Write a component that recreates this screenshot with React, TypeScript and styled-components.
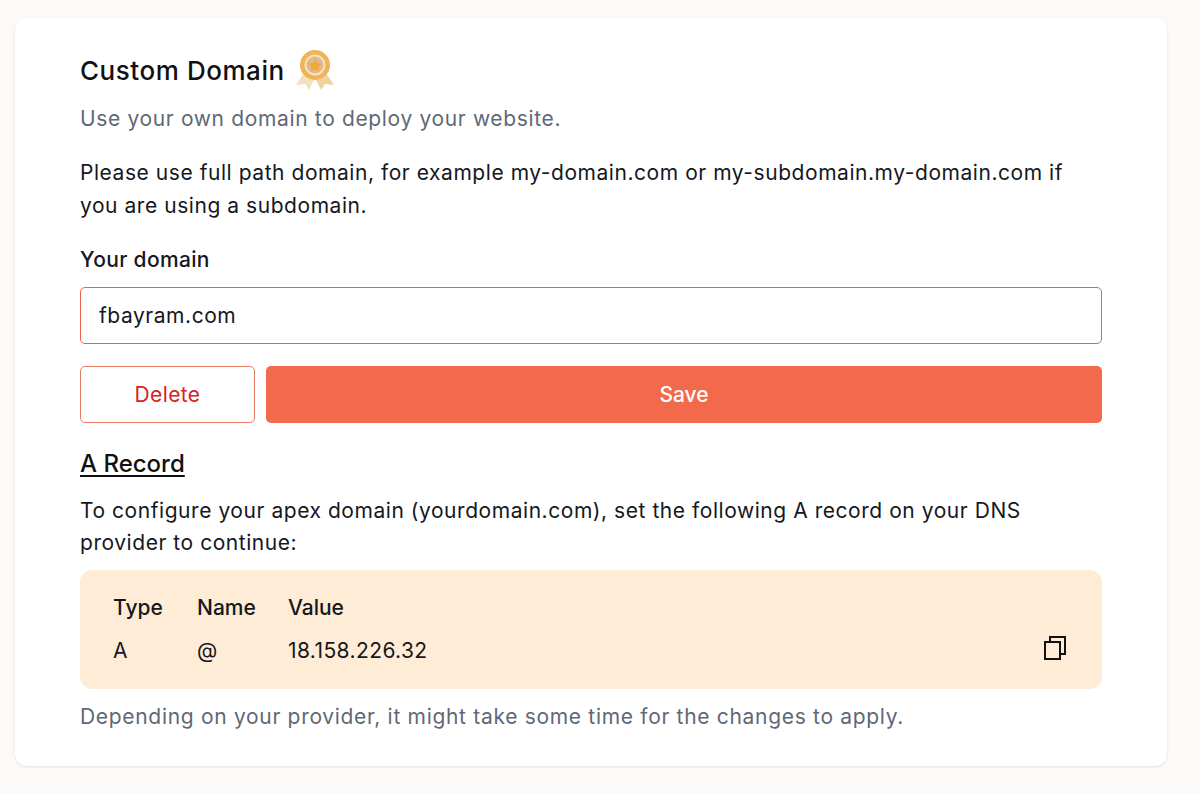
import styled, { createGlobalStyle } from 'styled-components';

const GlobalStyle = createGlobalStyle`
    html, body {
        margin: 0;
        padding: 0;
        background: #fbfaf8;
        font-family: "Inter", "Liberation Sans", sans-serif;
    }
`

const PageStyle = styled.div`
    width: 1200px;
    height: 794px;
    padding: 18px 33px 0px 15px;
    box-sizing: border-box;
    overflow: hidden;
`

const CardStyle = styled.div`
    height: 748px;
    padding: 30px 65px 0px 65px;
    box-sizing: border-box;
    background: #fff;
    border-radius: 12px;
    box-shadow: 0px 1px 3px rgba(0, 0, 0, 0.1);
`

const TitleRow = styled.div`
    height: 44px;
    display: flex;
    align-items: center;
    gap: 7px;
`

const TitleStyle = styled.h2`
    margin: 0;
    font-size: 26px;
    font-weight: 500;
    color: #111;
    letter-spacing: 0.55px;
`

const SubtitleStyle = styled.p`
    margin: 13px 0px 0px 0px;
    font-size: 21px;
    line-height: 28px;
    letter-spacing: 0.65px;
    color: #5f6877;
`

const BodyText = styled.p`
    margin: 0;
    font-size: 21px;
    line-height: 33px;
    letter-spacing: 0.55px;
    color: #15181d;
`

const Intro = styled(BodyText)`
    margin-top: 23px;
`

const FieldLabel = styled.label`
    display: block;
    margin-top: 23px;
    font-size: 21px;
    line-height: 30px;
    font-weight: 500;
    letter-spacing: 0.35px;
    color: #15181d;
`

const InputStyle = styled.input`
    display: block;
    width: 100%;
    height: 57px;
    margin-top: 12px;
    padding: 0px 18px;
    box-sizing: border-box;
    border: 1px solid #ea6244;
    border-radius: 5px;
    background: #fff;
    font-family: inherit;
    font-size: 21px;
    letter-spacing: 0.55px;
    color: #15181d;
    outline: none;
`

const ButtonRow = styled.div`
    display: flex;
    gap: 11px;
    margin-top: 22px;
`

const DeleteButton = styled.button`
    width: 175px;
    height: 57px;
    box-sizing: border-box;
    border: 1px solid #e57a65;
    border-radius: 5px;
    background: #fff;
    font-family: inherit;
    font-size: 21px;
    letter-spacing: 0.4px;
    color: #d92222;
`

const SaveButton = styled.button`
    flex: 1;
    height: 57px;
    border: none;
    border-radius: 5px;
    background: #f2694c;
    font-family: inherit;
    font-size: 21px;
    font-weight: 500;
    color: #fff;
`

const SectionTitle = styled.h3`
    margin: 24px 0px 0px 0px;
    font-size: 24px;
    line-height: 34px;
    font-weight: 500;
    color: #111;
    text-decoration: underline;
    text-underline-offset: 3px;
`

const RecordIntro = styled(BodyText)`
    margin-top: 14px;
    line-height: 32px;
`

const RecordBox = styled.div`
    height: 119px;
    margin-top: 11px;
    padding: 0px 36px 0px 33px;
    box-sizing: border-box;
    display: flex;
    align-items: center;
    justify-content: space-between;
    background: #feecd6;
    border-radius: 12px;
`

const RecordTable = styled.div`
    display: grid;
    grid-template-columns: 84px 91px auto;
    row-gap: 13px;
    font-size: 21px;
    line-height: 30px;
    letter-spacing: 0.4px;
    color: #15181d;
`

const HeadCell = styled.div`
    font-weight: 500;
    letter-spacing: 0;
`

const CopyIcon = styled.svg`
    width: 22px;
    height: 24px;
    margin-top: 37px;
    fill: none;
    stroke: #111;
    stroke-width: 2;
`

const FootNote = styled.p`
    margin: 14px 0px 0px 0px;
    font-size: 21px;
    line-height: 28px;
    letter-spacing: 0.69px;
    color: #5f6877;
`

const Badge = () => (
    <svg width="46" height="46" viewBox="0 0 46 46">
        <path d="M12 26 L4 38 L13 37 L17 43 L23 31 Z" fill="#f5e0bd" />
        <path d="M34 26 L42 38 L33 37 L29 43 L23 31 Z" fill="#f1d3a2" />
        <circle cx="23" cy="18" r="15" fill="#eeb456" />
        <circle cx="23" cy="18" r="10.5" fill="#f6e3c4" />
        <circle cx="23" cy="18" r="8.5" fill="#e3b98a" />
        <path d="M23 11.5 L25.2 16 L30 16.6 L26.4 19.8 L27.4 24.5 L23 22.2 L18.6 24.5 L19.6 19.8 L16 16.6 L20.8 16 Z" fill="#f0a93c" />
    </svg>
)

const App = () => {
    return(
        <PageStyle>
            <GlobalStyle />
            <CardStyle>
                <TitleRow>
                    <TitleStyle>Custom Domain</TitleStyle>
                    <Badge />
                </TitleRow>
                <SubtitleStyle>Use your own domain to deploy your website.</SubtitleStyle>

                <Intro>
                    Please use full path domain, for example my-domain.com or my-subdomain.my-domain.com if you are using a subdomain.
                </Intro>

                <FieldLabel>Your domain</FieldLabel>
                <InputStyle defaultValue="fbayram.com" />

                <ButtonRow>
                    <DeleteButton>Delete</DeleteButton>
                    <SaveButton>Save</SaveButton>
                </ButtonRow>

                <SectionTitle>A Record</SectionTitle>
                <RecordIntro>
                    To configure your apex domain (yourdomain.com), set the following A record on your DNS provider to continue:
                </RecordIntro>

                <RecordBox>
                    <RecordTable>
                        <HeadCell>Type</HeadCell>
                        <HeadCell>Name</HeadCell>
                        <HeadCell>Value</HeadCell>
                        <div>A</div>
                        <div>@</div>
                        <div>18.158.226.32</div>
                    </RecordTable>
                    <CopyIcon viewBox="0 0 22 24">
                        <rect x="1" y="6" width="15" height="17" />
                        <path d="M6 6 V1 H21 V18 H16" />
                    </CopyIcon>
                </RecordBox>

                <FootNote>Depending on your provider, it might take some time for the changes to apply.</FootNote>
            </CardStyle>
        </PageStyle>
    )
}

export default App;
